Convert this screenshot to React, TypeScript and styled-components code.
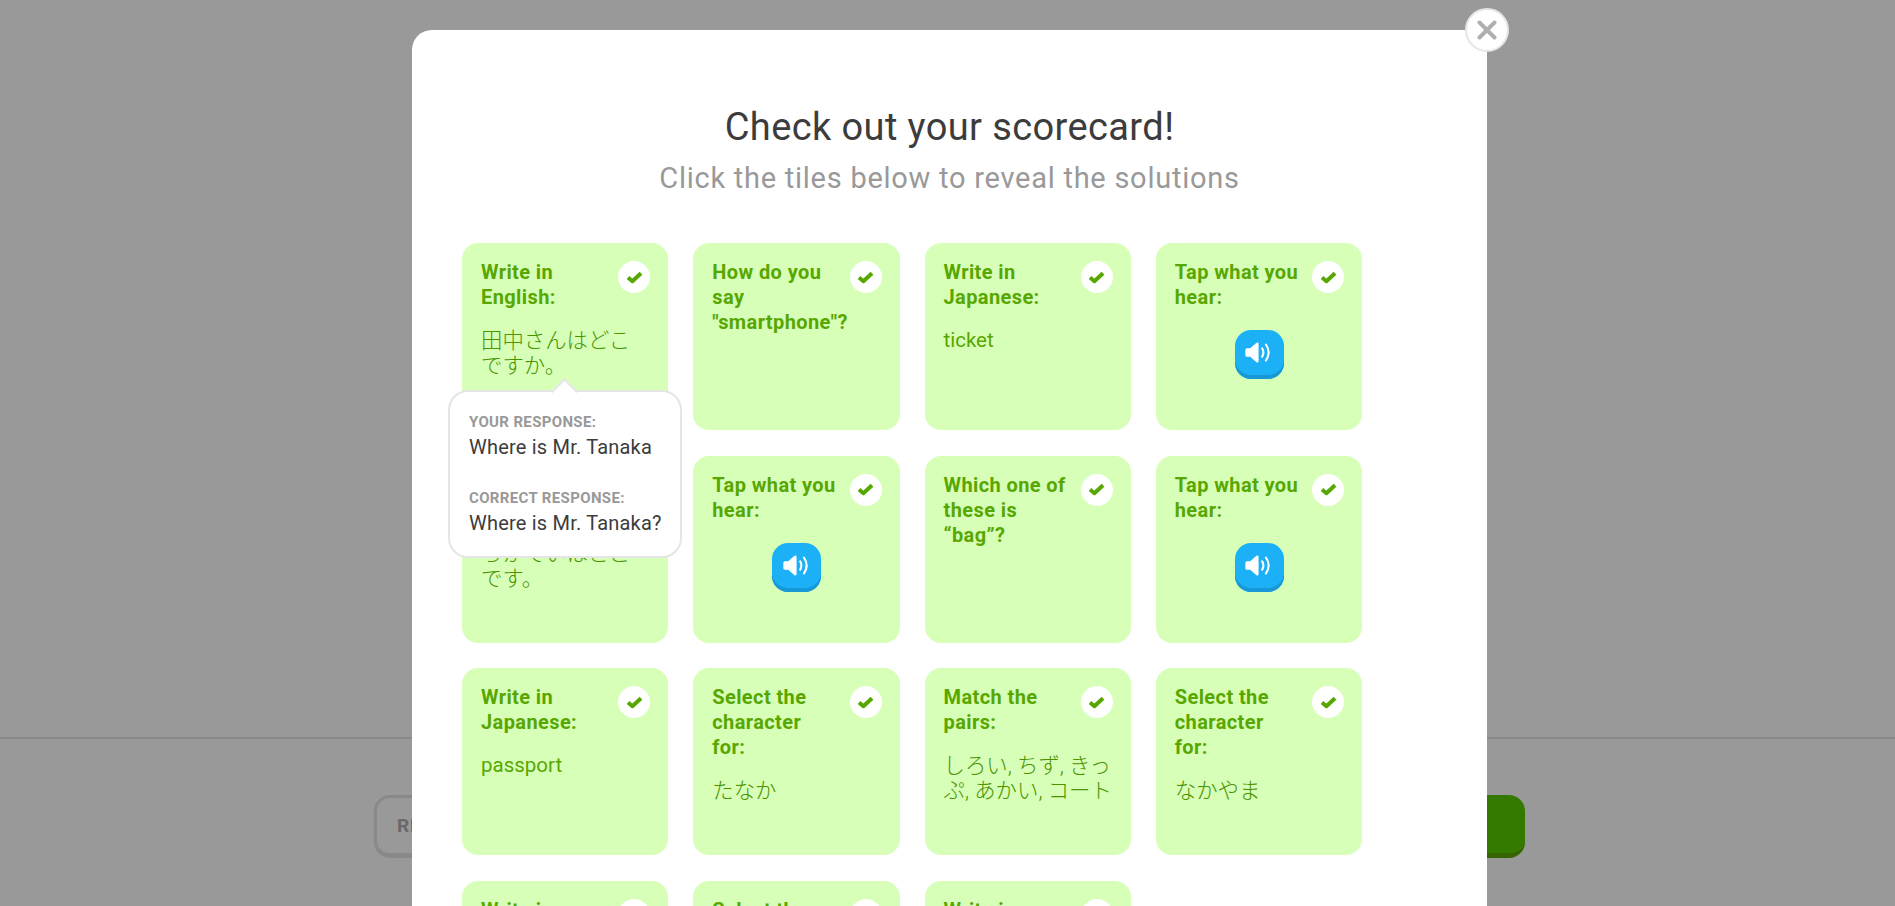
import * as React from "react";
import styled, { createGlobalStyle } from "styled-components";

const FONT = `Roboto, "Noto Sans CJK JP", sans-serif`;

const GlobalStyle = createGlobalStyle`
  html, body {
    margin: 0;
    height: 100%;
    overflow: hidden;
    background: #fff;
    font-family: ${FONT};
  }
  * {
    box-sizing: border-box;
  }
`;

const Page = styled.div`
  height: 906px;
  display: flex;
  flex-direction: column;
  justify-content: flex-end;
`;

const Footer = styled.div`
  height: 169px;
  border-top: 2px solid #e5e5e5;
  padding: 56px 370px 0 374px;
  display: flex;
  justify-content: space-between;
  align-items: flex-start;
`;

const FooterButton = styled.button<{ $primary?: boolean }>`
  height: 63px;
  width: 200px;
  border-radius: 16px;
  font-family: ${FONT};
  font-size: 19px;
  font-weight: 700;
  letter-spacing: 0.8px;
  text-align: left;
  white-space: nowrap;
  padding: 0 0 0 20px;
  border: ${(p) => (p.$primary ? "none" : "3px solid #e5e5e5")};
  border-bottom: ${(p) => (p.$primary ? "5px solid #58a700" : "5px solid #e5e5e5")};
  background: ${(p) => (p.$primary ? "#58cc02" : "#fff")};
  color: ${(p) => (p.$primary ? "#fff" : "#afafaf")};
`;

const Overlay = styled.div`
  position: fixed;
  inset: 0;
  background: rgba(0, 0, 0, 0.4);
  padding: 30px 408px 0 412px;
  overflow: hidden;
`;

const Modal = styled.div`
  position: relative;
  width: 1075px;
  background: #fff;
  border-radius: 20px;
  padding: 74px 50px 40px;
`;

const CloseButton = styled.button`
  position: absolute;
  top: -22px;
  right: -22px;
  width: 44px;
  height: 44px;
  padding: 0;
  border-radius: 50%;
  background: #fff;
  border: 2px solid #e5e5e5;
  display: flex;
  align-items: center;
  justify-content: center;
`;

const Heading = styled.h1`
  margin: 0;
  text-align: center;
  font-size: 38px;
  line-height: 46px;
  font-weight: 400;
  letter-spacing: 0.4px;
  color: #3c3c3c;
`;

const SubHeading = styled.h2`
  margin: 8px 0 0;
  text-align: center;
  font-size: 29px;
  line-height: 40px;
  font-weight: 400;
  letter-spacing: 0.74px;
  color: #999;
`;

const Grid = styled.div`
  margin-top: 45px;
  display: grid;
  grid-template-columns: repeat(4, 206.25px);
  grid-auto-rows: 187px;
  column-gap: 25px;
  row-gap: 25.5px;
`;

const Tile = styled.div<{ $raised?: boolean }>`
  position: relative;
  z-index: ${(p) => (p.$raised ? 2 : 1)};
  background: #d7ffb8;
  border-radius: 16px;
  padding: 17px 18px 17px 19px;
  color: #58a700;
`;

const TileHead = styled.div`
  display: flex;
  justify-content: space-between;
  align-items: flex-start;
`;

const TileTitle = styled.div`
  font-size: 20px;
  line-height: 25px;
  font-weight: 700;
  letter-spacing: 0.4px;
  white-space: pre-line;
`;

const CheckBadge = styled.span`
  flex: none;
  width: 32px;
  height: 32px;
  margin-top: 1px;
  border-radius: 50%;
  background: #fff;
  display: flex;
  align-items: center;
  justify-content: center;
`;

const TileBody = styled.div<{ $cjk?: boolean }>`
  margin-top: 18px;
  font-size: ${(p) => (p.$cjk ? "21.4px" : "20.5px")};
  line-height: 25px;
  font-weight: ${(p) => (p.$cjk ? 300 : 400)};
  color: ${(p) => (p.$cjk ? "#4b9400" : "#58a700")};
  white-space: pre-line;
`;

const SoundButton = styled.div`
  width: 49px;
  height: 49px;
  margin: 20px auto 0;
  border-radius: 16px;
  background: #1cb0f6;
  box-shadow: inset 0 -4px 0 #1899d6;
  display: flex;
  align-items: center;
  justify-content: center;
  padding-bottom: 4px;
`;

const Tooltip = styled.div`
  position: absolute;
  top: 147px;
  left: -14px;
  width: 234px;
  height: 168px;
  background: #fff;
  border: 2px solid #e5e5e5;
  border-radius: 20px;
  padding: 18px 0 0 19px;
  color: #3c3c3c;
  &::before {
    content: "";
    position: absolute;
    top: -10px;
    left: 105px;
    width: 17px;
    height: 17px;
    background: #fff;
    border-top: 2px solid #e5e5e5;
    border-left: 2px solid #e5e5e5;
    transform: rotate(45deg);
  }
`;

const ResponseLabel = styled.div`
  font-size: 15px;
  line-height: 25px;
  font-weight: 700;
  letter-spacing: 0.35px;
  color: #999;
  white-space: nowrap;
`;

const ResponseText = styled.div`
  font-size: 20px;
  line-height: 25px;
  letter-spacing: 0.2px;
  margin-bottom: 26px;
  white-space: nowrap;
`;

const CheckIcon = () => (
  <svg width="17" height="13" viewBox="0 0 17 13">
    <path d="M2 6.5 L6.4 10.2 L15 2.2" fill="none" stroke="#58a700" strokeWidth="4" strokeLinejoin="round" />
  </svg>
);

const SoundIcon = () => (
  <svg width="28" height="21" viewBox="0 0 26 20">
    <path
      d="M1.5 6 H4.6 L10.6 .7 Q12.6 -.3 12.6 1.8 V18.2 Q12.6 20.3 10.6 19.3 L4.6 14 H1.5 Q0 14 0 12.5 V7.5 Q0 6 1.5 6 Z"
      fill="#fff"
    />
    <path
      d="M16 6 Q18.4 10 16 14 M19.6 2.4 Q24.8 10 19.6 17.6"
      fill="none"
      stroke="#fff"
      strokeWidth="2"
      strokeLinecap="round"
    />
  </svg>
);

interface ITile {
  title: string;
  body?: string;
  cjk?: boolean;
  sound?: boolean;
}

const TILES: ITile[] = [
  { title: "Write in\nEnglish:", body: "田中さんはどこ\nですか。", cjk: true },
  { title: 'How do you\nsay\n"smartphone"?' },
  { title: "Write in\nJapanese:", body: "ticket" },
  { title: "Tap what you\nhear:", sound: true },
  { title: "Write in\nJapanese:", body: "ちかていはどこ\nです。", cjk: true },
  { title: "Tap what you\nhear:", sound: true },
  { title: "Which one of\nthese is\n“bag”?" },
  { title: "Tap what you\nhear:", sound: true },
  { title: "Write in\nJapanese:", body: "passport" },
  { title: "Select the\ncharacter\nfor:", body: "たなか", cjk: true },
  { title: "Match the\npairs:", body: "しろい, ちず, きっ\nぷ, あかい, コート", cjk: true },
  { title: "Select the\ncharacter\nfor:", body: "なかやま", cjk: true },
  { title: "Write in\nEnglish:" },
  { title: "Select the\ncharacter\nfor:" },
  { title: "Write in\nJapanese:" },
];

export default function App() {
  return (
    <>
      <GlobalStyle />
      <Page>
        <Footer>
          <FooterButton>REVIEW LESSON</FooterButton>
          <FooterButton $primary>CONTINUE</FooterButton>
        </Footer>
      </Page>
      <Overlay>
        <Modal>
          <CloseButton aria-label="Close">
            <svg width="20" height="20" viewBox="0 0 20 20">
              <path d="M2.5 2.5 L17.5 17.5 M17.5 2.5 L2.5 17.5" stroke="#afafaf" strokeWidth="4" strokeLinecap="round" />
            </svg>
          </CloseButton>
          <Heading>Check out your scorecard!</Heading>
          <SubHeading>Click the tiles below to reveal the solutions</SubHeading>
          <Grid>
            {TILES.map((tile, i) => (
              <Tile key={i} $raised={i === 0}>
                <TileHead>
                  <TileTitle>{tile.title}</TileTitle>
                  <CheckBadge>
                    <CheckIcon />
                  </CheckBadge>
                </TileHead>
                {tile.body && <TileBody $cjk={tile.cjk}>{tile.body}</TileBody>}
                {tile.sound && (
                  <SoundButton>
                    <SoundIcon />
                  </SoundButton>
                )}
                {i === 0 && (
                  <Tooltip>
                    <ResponseLabel>YOUR RESPONSE:</ResponseLabel>
                    <ResponseText>Where is Mr. Tanaka</ResponseText>
                    <ResponseLabel>CORRECT RESPONSE:</ResponseLabel>
                    <ResponseText>Where is Mr. Tanaka?</ResponseText>
                  </Tooltip>
                )}
              </Tile>
            ))}
          </Grid>
        </Modal>
      </Overlay>
    </>
  );
}
